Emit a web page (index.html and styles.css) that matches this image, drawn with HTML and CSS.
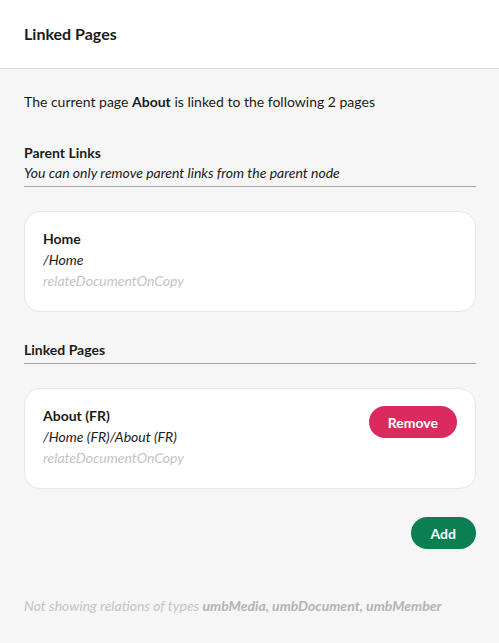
FILE: index.html
```html
<!DOCTYPE html>
<html lang="en">
<head>
  <meta charset="UTF-8" />
  <meta name="viewport" content="width=device-width, initial-scale=1.0"/>
  <title>Linked Pages</title>
  <link rel="stylesheet" href="styles.css">
</head>
<body>

<header class="panel-head">
  <h1>Linked Pages</h1>
</header>

<main class="panel-body">
  <p class="intro">The current page <strong>About</strong> is linked to the following 2 pages</p>

  <div class="group-head">
    <h2>Parent Links</h2>
    <p class="hint">You can only remove parent links from the parent node</p>
  </div>

  <div class="link-card">
    <div class="link-info">
      <div class="link-name">Home</div>
      <div class="link-path">/Home</div>
      <div class="link-type">relateDocumentOnCopy</div>
    </div>
  </div>

  <div class="group-head group-head-next">
    <h2>Linked Pages</h2>
  </div>

  <div class="link-card">
    <div class="link-info">
      <div class="link-name">About (FR)</div>
      <div class="link-path">/Home (FR)/About (FR)</div>
      <div class="link-type">relateDocumentOnCopy</div>
    </div>
    <button class="btn btn-danger">Remove</button>
  </div>

  <div class="actions">
    <button class="btn btn-positive">Add</button>
  </div>

  <p class="footnote">Not showing relations of types <strong>umbMedia, umbDocument, umbMember</strong></p>
</main>

</body>
</html>
```

FILE: styles.css
```css
* {
  margin: 0;
  padding: 0;
  box-sizing: border-box;
}

body {
  font-family: Lato, 'Open Sans', sans-serif;
  font-size: 14px;
  line-height: 20px;
  color: #1b1b1b;
  background: #f6f6f6;
}

.panel-head {
  height: 69px;
  background: #fff;
  border-bottom: 1px solid #d8d8d8;
  display: flex;
  align-items: center;
  padding: 0 24px;
}

.panel-head h1 {
  font-size: 16px;
  font-weight: 700;
}

.panel-body {
  padding: 23px 23px 24px 24px;
}

.intro strong {
  font-weight: 700;
}

.group-head {
  margin-top: 31px;
  padding-bottom: 3px;
  border-bottom: 1px solid #a6a6a6;
}

.group-head-next {
  margin-top: 28px;
}

.group-head h2 {
  font-size: 14px;
  font-weight: 700;
}

.hint {
  font-style: italic;
}

.link-card {
  margin-top: 24px;
  background: #fff;
  border: 1px solid #e8e8e8;
  border-radius: 16px;
  padding: 16px 18px 20px;
  display: flex;
  justify-content: space-between;
  align-items: flex-start;
}

.link-info {
  line-height: 21px;
}

.link-name {
  font-weight: 700;
}

.link-path {
  font-style: italic;
}

.link-type {
  font-style: italic;
  color: #c4c4c4;
}

.btn {
  font-family: Lato, 'Open Sans', sans-serif;
  font-size: 14px;
  font-weight: 700;
  color: #fff;
  border: none;
  border-radius: 16px;
  height: 32px;
  padding: 0 19px;
  cursor: pointer;
}

.btn-danger {
  background: #db2a5e;
  margin-top: 1px;
}

.btn-positive {
  background: #0b7f51;
  padding: 0 20px;
}

.actions {
  margin-top: 28px;
  display: flex;
  justify-content: flex-end;
}

.footnote {
  margin-top: 47px;
  font-style: italic;
  color: #c4c4c4;
}

.footnote strong {
  color: #b4b4b4;
}
```
